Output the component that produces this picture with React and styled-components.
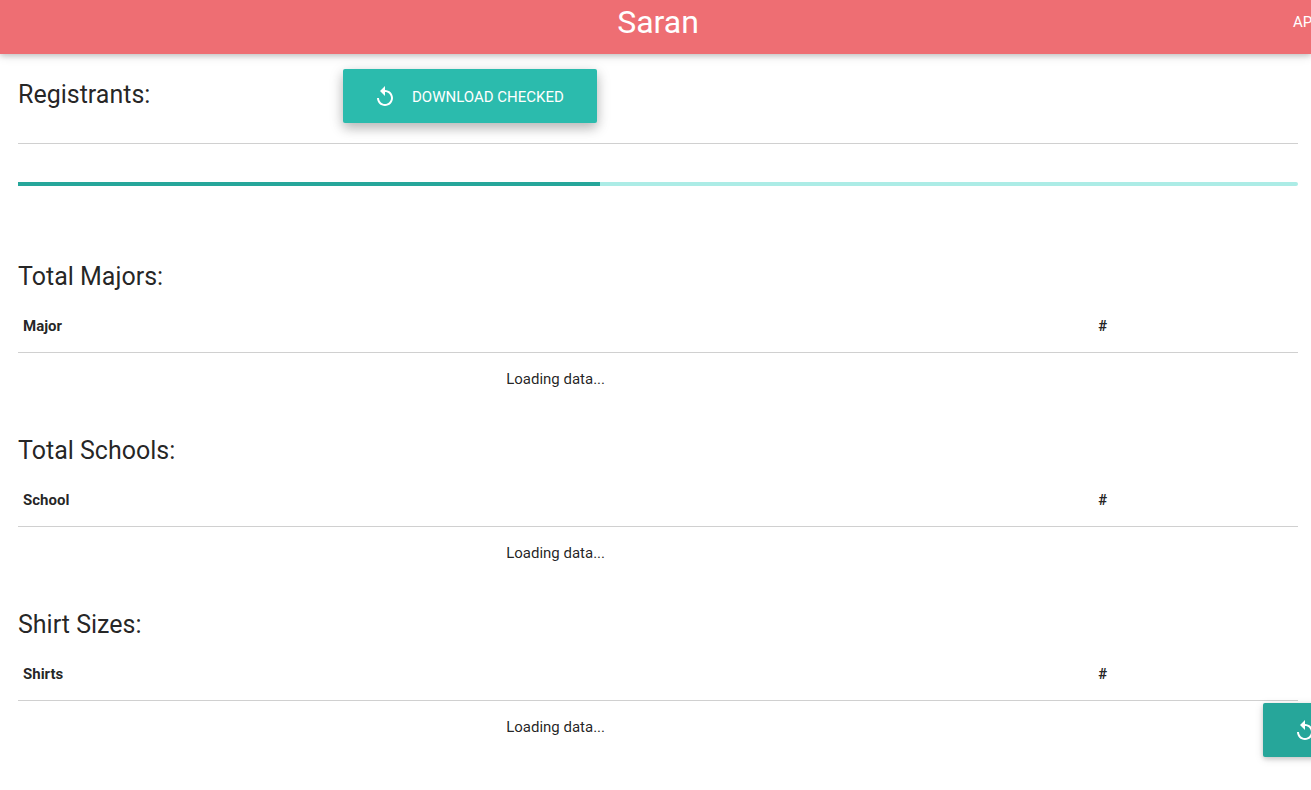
import React from 'react';
import styled, { createGlobalStyle } from 'styled-components';
import { MdReplay } from 'react-icons/md';

const GlobalStyle = createGlobalStyle`
  *, *::before, *::after { box-sizing: border-box; }
  html { font-size: 15px; }
  body {
    margin: 0;
    overflow-x: hidden;
    background: #fff;
    color: rgba(0, 0, 0, 0.87);
    font-family: Roboto, sans-serif;
    line-height: 22px;
  }
`;

const NavBar = styled.nav`
  display: grid;
  grid-template-columns: 1fr auto 1fr;
  height: 54px;
  padding-left: 5px;
  background: #ee6e73;
  color: #fff;
  box-shadow: 0 2px 5px 0 rgba(0, 0, 0, 0.16), 0 2px 10px 0 rgba(0, 0, 0, 0.12);
`;

const Brand = styled.a`
  grid-column: 2;
  color: inherit;
  font-size: 32px;
  line-height: 44px;
  text-decoration: none;
`;

const NavLinks = styled.div`
  display: flex;
  justify-content: flex-end;
  margin-right: -20px;
`;

const NavLink = styled.a`
  color: inherit;
  font-size: 15px;
  line-height: 44px;
  width: 38px;
  white-space: nowrap;
  text-decoration: none;
`;

const Main = styled.main`
  padding: 15px 13px 0 18px;
`;

const Toolbar = styled.header`
  display: grid;
  grid-template-columns: 325px 1fr;
  align-items: start;
  height: 75px;
  border-bottom: 1px solid #d0d0d0;
`;

const Title = styled.h2`
  margin: 0;
  font-size: 25px;
  font-weight: 400;
  line-height: 28px;
`;

const ToolbarTitle = styled(Title)`
  padding-top: 12px;
`;

const Button = styled.button`
  display: inline-flex;
  align-items: center;
  justify-self: start;
  gap: 15px;
  height: 54px;
  padding: 2px 33px 0 30px;
  border: 0;
  border-radius: 2px;
  background: ${({ $raised }) => ($raised ? '#2bbbad' : '#26a69a')};
  color: #fff;
  font: 400 15px/52px Roboto, sans-serif;
  text-transform: uppercase;
  white-space: nowrap;
  cursor: pointer;
  box-shadow: ${({ $raised }) => ($raised
    ? '0 5px 11px 0 rgba(0, 0, 0, 0.18), 0 4px 15px 0 rgba(0, 0, 0, 0.15)'
    : '0 2px 5px 0 rgba(0, 0, 0, 0.16), 0 2px 10px 0 rgba(0, 0, 0, 0.12)')};
  svg { width: 24px; height: 24px; flex: none; }
`;

const Progress = styled.div`
  height: 4px;
  margin: 38px 0 77px;
  border-radius: 2px;
  background: #acece6;
`;

const ProgressFill = styled.div`
  height: 100%;
  background: #26a69a;
`;

const Section = styled.section`
  padding-bottom: 32px;
`;

const Table = styled.table`
  width: 100%;
  margin-top: 9px;
  border-collapse: collapse;
  table-layout: fixed;
  thead { border-bottom: 1px solid #d0d0d0; }
  th, td { padding: 15px 5px; }
  th { font-weight: 700; text-align: left; }
  th:first-child { width: 84%; }
  td { text-align: center; }
`;

const FloatingAction = styled.div`
  position: fixed;
  left: calc(100% - 48px);
  bottom: 33px;
`;

const groups = [
  { title: 'Total Majors:', column: 'Major' },
  { title: 'Total Schools:', column: 'School' },
  { title: 'Shirt Sizes:', column: 'Shirts' },
];

function Summary({ title, column }) {
  return (
    <Section>
      <Title>{title}</Title>
      <Table>
        <thead><tr><th scope="col">{column}</th><th scope="col">#</th></tr></thead>
        <tbody><tr><td>Loading data...</td><td /></tr></tbody>
      </Table>
    </Section>
  );
}

export default function App() {
  const progress = 45.5;
  return (
    <>
      <GlobalStyle />
      <NavBar>
        <Brand href="#">Saran</Brand>
        <NavLinks><NavLink href="#">AP</NavLink></NavLinks>
      </NavBar>
      <Main>
        <Toolbar>
          <ToolbarTitle>Registrants:</ToolbarTitle>
          <Button type="button" $raised><MdReplay />Download checked</Button>
        </Toolbar>
        <Progress role="progressbar" aria-label="Loading registrants" aria-valuenow={progress}>
          <ProgressFill style={{ width: `${progress}%` }} />
        </Progress>
        {groups.map((group) => <Summary key={group.title} {...group} />)}
      </Main>
      <FloatingAction>
        <Button type="button" aria-label="Reload"><MdReplay /></Button>
      </FloatingAction>
    </>
  );
}
